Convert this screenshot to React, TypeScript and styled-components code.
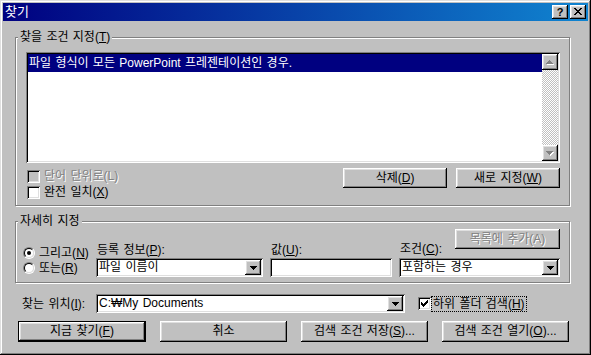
import React from 'react';
import styled, { createGlobalStyle, css } from 'styled-components';

const Global = createGlobalStyle`
  html, body { margin: 0; padding: 0; background: #c0c0c0; }
  body {
    font-family: "Liberation Sans", "Noto Sans CJK KR", "Noto Sans", sans-serif;
    font-size: 12px;
    line-height: 14px;
    word-spacing: 1px;
    color: #000;
  }
  * { box-sizing: border-box; }
  u { text-decoration: underline; text-underline-offset: 1px; }
`;

const raised = css`
  box-shadow: inset -1px -1px #000, inset 1px 1px #fff, inset -2px -2px #808080, inset 2px 2px #dfdfdf;
`;
const sunken = css`
  box-shadow: inset 1px 1px #808080, inset -1px -1px #fff, inset 2px 2px #000, inset -2px -2px #dfdfdf;
`;

const pixelPath = (rows: string[]) => {
  let d = '';
  rows.forEach((row, y) => {
    let x = 0;
    while (x < row.length) {
      if (row[x] === 'X') {
        const s = x;
        while (x < row.length && row[x] === 'X') x++;
        d += `M${s} ${y}h${x - s}v1h${s - x}z`;
      } else x++;
    }
  });
  return d;
};

const CLOSE = ['XX....XX', '.XX..XX.', '..XXXX..', '...XX...', '..XXXX..', '.XX..XX.', 'XX....XX'];
const UP = ['...X...', '..XXX..', '.XXXXX.', 'XXXXXXX'];
const DOWN = [...UP].reverse();
const CHECK = ['......X', '.....XX', 'X...XXX', 'XX.XXX.', 'XXXXX..', '.XXX...', '..X....'];

const PixelIcon: React.FC<{ rows: string[]; color?: string; shadow?: boolean }> = ({ rows, color = '#000', shadow }) => {
  const w = rows[0].length + (shadow ? 1 : 0);
  const h = rows.length + (shadow ? 1 : 0);
  const d = pixelPath(rows);
  return (
    <svg width={w} height={h} viewBox={`0 0 ${w} ${h}`} shapeRendering="crispEdges" style={{ display: 'block' }}>
      {shadow && <path d={d} fill="#fff" transform="translate(1 1)" />}
      <path d={d} fill={color} />
    </svg>
  );
};

const Window = styled.div`
  width: 591px;
  height: 355px;
  padding: 3px;
  background: #c0c0c0;
  box-shadow: inset -1px -1px #000, inset 1px 1px #dfdfdf, inset -2px -2px #808080, inset 2px 2px #fff;
  display: flex;
  flex-direction: column;
`;

const TitleBar = styled.div`
  flex: none;
  height: 18px;
  padding: 0 2px;
  display: flex;
  align-items: center;
  background: linear-gradient(to right, #000080, #1084d0);
`;

const Title = styled.span`
  flex: 1;
  color: #fff;
  font-weight: normal;
  font-size: 13px;
  line-height: 18px;
`;

const CaptionButton = styled.div<{ $ml?: number }>`
  width: 16px;
  height: 14px;
  margin-left: ${p => p.$ml ?? 0}px;
  background: #c0c0c0;
  ${raised}
  display: flex;
  align-items: center;
  justify-content: center;
  font: bold 11px/14px "Liberation Sans", sans-serif;
  padding-bottom: 1px;
`;

const Body = styled.div`
  display: flex;
  flex-direction: column;
  align-items: flex-start;
  padding-left: 12px;
`;

const Group = styled.div<{ $mt: number }>`
  margin-top: ${p => p.$mt}px;
  width: 555px;
  border: 1px solid #808080;
  box-shadow: inset 1px 1px #fff, 1px 1px #fff;
  display: flex;
  flex-direction: column;
`;

const Caption = styled.div`
  align-self: flex-start;
  margin: -8px 0 0 2px;
  padding: 0 2px;
  line-height: 14px;
  background: #c0c0c0;
  white-space: nowrap;
`;

const Group1Inner = styled.div`
  padding: 8px 9px 5px 10px;
  display: flex;
  flex-direction: column;
`;

const ListBox = styled.div`
  height: 111px;
  padding: 2px;
  background: #fff;
  ${sunken}
  display: flex;
`;

const ListItems = styled.div`
  flex: 1;
  min-width: 0;
`;

const ListItem = styled.div<{ $selected?: boolean }>`
  height: 18px;
  line-height: 18px;
  padding-left: 1px;
  white-space: nowrap;
  background: ${p => (p.$selected ? '#000080' : 'transparent')};
  color: ${p => (p.$selected ? '#fff' : '#000')};
`;

const Scrollbar = styled.div`
  width: 16px;
  display: flex;
  flex-direction: column;
  justify-content: space-between;
  background: repeating-conic-gradient(#c0c0c0 0 25%, #fff 0 50%) 0 0 / 2px 2px;
`;

const ScrollButton = styled.div`
  width: 16px;
  height: 16px;
  background: #c0c0c0;
  ${raised}
  display: flex;
  align-items: center;
  justify-content: center;
`;

const OptionsRow = styled.div`
  margin-top: 5px;
  display: flex;
  justify-content: space-between;
`;

const CheckColumn = styled.div`
  display: flex;
  flex-direction: column;
  padding-left: 1px;
`;

const CheckItem = styled.div<{ $disabled?: boolean; $ml?: number }>`
  height: 16px;
  margin-left: ${p => p.$ml ?? 0}px;
  display: flex;
  align-items: center;
  gap: 4px;
  white-space: nowrap;
  line-height: 14px;
  color: ${p => (p.$disabled ? '#808080' : '#000')};
  text-shadow: ${p => (p.$disabled ? '1px 1px 0 #fff' : 'none')};
`;

const CheckBox = styled.span<{ $disabled?: boolean }>`
  flex: none;
  width: 13px;
  height: 13px;
  background: ${p => (p.$disabled ? '#c0c0c0' : '#fff')};
  ${sunken}
  display: flex;
  align-items: center;
  justify-content: center;
`;

const ButtonPair = styled.div`
  display: flex;
  gap: 9px;
`;

const Button = styled.button<{ $w: number; $h?: number; $default?: boolean; $mb?: number }>`
  flex: none;
  width: ${p => p.$w}px;
  height: ${p => p.$h ?? 20}px;
  margin: 0 0 ${p => p.$mb ?? 0}px 0;
  padding: 0 0 1px 0;
  border: ${p => (p.$default ? '1px solid #000' : '0')};
  background: #c0c0c0;
  ${raised}
  font-family: inherit;
  font-size: 12px;
  line-height: 14px;
  word-spacing: 1px;
  color: #000;
  white-space: nowrap;
  display: flex;
  align-items: center;
  justify-content: center;
  &:disabled {
    color: #808080;
    text-shadow: 1px 1px 0 #fff;
  }
`;

const Group2Inner = styled.div`
  padding: 1px 9px 5px 7px;
  display: flex;
  align-items: flex-end;
`;

const RadioColumn = styled.div`
  width: 73px;
  flex: none;
  margin-bottom: 2px;
  display: flex;
  flex-direction: column;
`;

const RadioItem = styled.div`
  height: 15px;
  line-height: 14px;
  display: flex;
  align-items: center;
  gap: 4px;
  white-space: nowrap;
`;

const RadioOuter = styled.span`
  flex: none;
  width: 12px;
  height: 12px;
  border-radius: 50%;
  border: 1px solid;
  border-color: #808080 #fff #fff #808080;
  display: flex;
`;

const RadioInner = styled.span`
  width: 10px;
  height: 10px;
  border-radius: 50%;
  border: 1px solid;
  border-color: #000 #dfdfdf #dfdfdf #000;
  background: #fff;
  display: flex;
  align-items: center;
  justify-content: center;
`;

const RadioDot = styled.span`
  width: 4px;
  height: 4px;
  border-radius: 50%;
  background: #000;
`;

const FieldColumn = styled.div<{ $w: number; $ml?: number }>`
  flex: none;
  width: ${p => p.$w}px;
  margin-left: ${p => p.$ml ?? 0}px;
  display: flex;
  flex-direction: column;
`;

const FieldLabel = styled.div`
  line-height: 14px;
  padding-left: 1px;
  margin-bottom: 1px;
  white-space: nowrap;
`;

const CondHeader = styled.div`
  display: flex;
  justify-content: space-between;
  align-items: flex-end;
  margin-bottom: 1px;
`;

const Field = styled.div<{ $w?: number }>`
  width: ${p => (p.$w ? `${p.$w}px` : '100%')};
  height: 19px;
  flex: none;
  padding: 2px;
  background: #fff;
  ${sunken}
  display: flex;
`;

const FieldText = styled.span`
  flex: 1;
  min-width: 0;
  padding-left: 1px;
  line-height: 15px;
  white-space: nowrap;
  overflow: hidden;
`;

const DropButton = styled.span`
  flex: none;
  width: 16px;
  background: #c0c0c0;
  ${raised}
  display: flex;
  align-items: center;
  justify-content: center;
`;

const LocationRow = styled.div`
  margin: 11px 0 0 7px;
  height: 19px;
  display: flex;
  align-items: center;
`;

const LocationLabel = styled.span`
  width: 74px;
  flex: none;
  white-space: nowrap;
`;

const FocusText = styled.span`
  outline: 1px dotted #000;
  outline-offset: 0;
  padding: 0 1px;
  line-height: 14px;
  margin-left: -3px;
`;

const ButtonRow = styled.div`
  margin: 8px 0 0 3px;
  display: flex;
  gap: 14px;
`;

const Combo: React.FC<{ value: string; w?: number }> = ({ value, w }) => (
  <Field $w={w}>
    <FieldText>{value}</FieldText>
    <DropButton>
      <PixelIcon rows={DOWN} />
    </DropButton>
  </Field>
);

const Radio: React.FC<{ checked?: boolean }> = ({ checked }) => (
  <RadioOuter>
    <RadioInner>{checked && <RadioDot />}</RadioInner>
  </RadioOuter>
);

export default function App() {
  return (
    <>
      <Global />
      <Window>
        <TitleBar>
          <Title>찾기</Title>
          <CaptionButton>?</CaptionButton>
          <CaptionButton $ml={2}>
            <PixelIcon rows={CLOSE} />
          </CaptionButton>
        </TitleBar>
        <Body>
          <Group $mt={16}>
            <Caption>
              찾을 조건 지정(<u>T</u>)
            </Caption>
            <Group1Inner>
              <ListBox>
                <ListItems>
                  <ListItem $selected>파일 형식이 모든 PowerPoint 프레젠테이션인 경우.</ListItem>
                </ListItems>
                <Scrollbar>
                  <ScrollButton>
                    <PixelIcon rows={UP} color="#808080" shadow />
                  </ScrollButton>
                  <ScrollButton>
                    <PixelIcon rows={DOWN} color="#808080" shadow />
                  </ScrollButton>
                </Scrollbar>
              </ListBox>
              <OptionsRow>
                <CheckColumn>
                  <CheckItem $disabled>
                    <CheckBox $disabled />
                    <span>단어 단위로(L)</span>
                  </CheckItem>
                  <CheckItem>
                    <CheckBox />
                    <span>
                      완전 일치(<u>X</u>)
                    </span>
                  </CheckItem>
                </CheckColumn>
                <ButtonPair>
                  <Button $w={104}>
                    삭제(<u>D</u>)
                  </Button>
                  <Button $w={104}>
                    새로 지정(<u>W</u>)
                  </Button>
                </ButtonPair>
              </OptionsRow>
            </Group1Inner>
          </Group>

          <Group $mt={15}>
            <Caption>자세히 지정</Caption>
            <Group2Inner>
              <RadioColumn>
                <RadioItem>
                  <Radio checked />
                  <span>
                    그리고(<u>N</u>)
                  </span>
                </RadioItem>
                <RadioItem>
                  <Radio />
                  <span>
                    또는(<u>R</u>)
                  </span>
                </RadioItem>
              </RadioColumn>
              <FieldColumn $w={167}>
                <FieldLabel>
                  등록 정보(<u>P</u>):
                </FieldLabel>
                <Combo value="파일 이름이" />
              </FieldColumn>
              <FieldColumn $w={122} $ml={7}>
                <FieldLabel>
                  값(<u>U</u>):
                </FieldLabel>
                <Field>
                  <FieldText />
                </Field>
              </FieldColumn>
              <FieldColumn $w={161} $ml={7}>
                <CondHeader>
                  <FieldLabel>
                    조건(<u>C</u>):
                  </FieldLabel>
                  <Button $w={105} $mb={8} disabled>
                    목록에 추가(A)
                  </Button>
                </CondHeader>
                <Combo value="포함하는 경우" />
              </FieldColumn>
            </Group2Inner>
          </Group>

          <LocationRow>
            <LocationLabel>
              찾는 위치(<u>I</u>):
            </LocationLabel>
            <Combo value="C:₩My Documents" w={309} />
            <CheckItem $ml={13}>
              <CheckBox>
                <PixelIcon rows={CHECK} />
              </CheckBox>
              <FocusText>
                하위 폴더 검색(<u>H</u>)
              </FocusText>
            </CheckItem>
          </LocationRow>

          <ButtonRow>
            <Button $w={128} $h={21} $default>
              지금 찾기(<u>F</u>)
            </Button>
            <Button $w={127} $h={21}>
              취소
            </Button>
            <Button $w={127} $h={21}>
              검색 조건 저장(<u>S</u>)...
            </Button>
            <Button $w={127} $h={21}>
              검색 조건 열기(<u>O</u>)...
            </Button>
          </ButtonRow>
        </Body>
      </Window>
    </>
  );
}
